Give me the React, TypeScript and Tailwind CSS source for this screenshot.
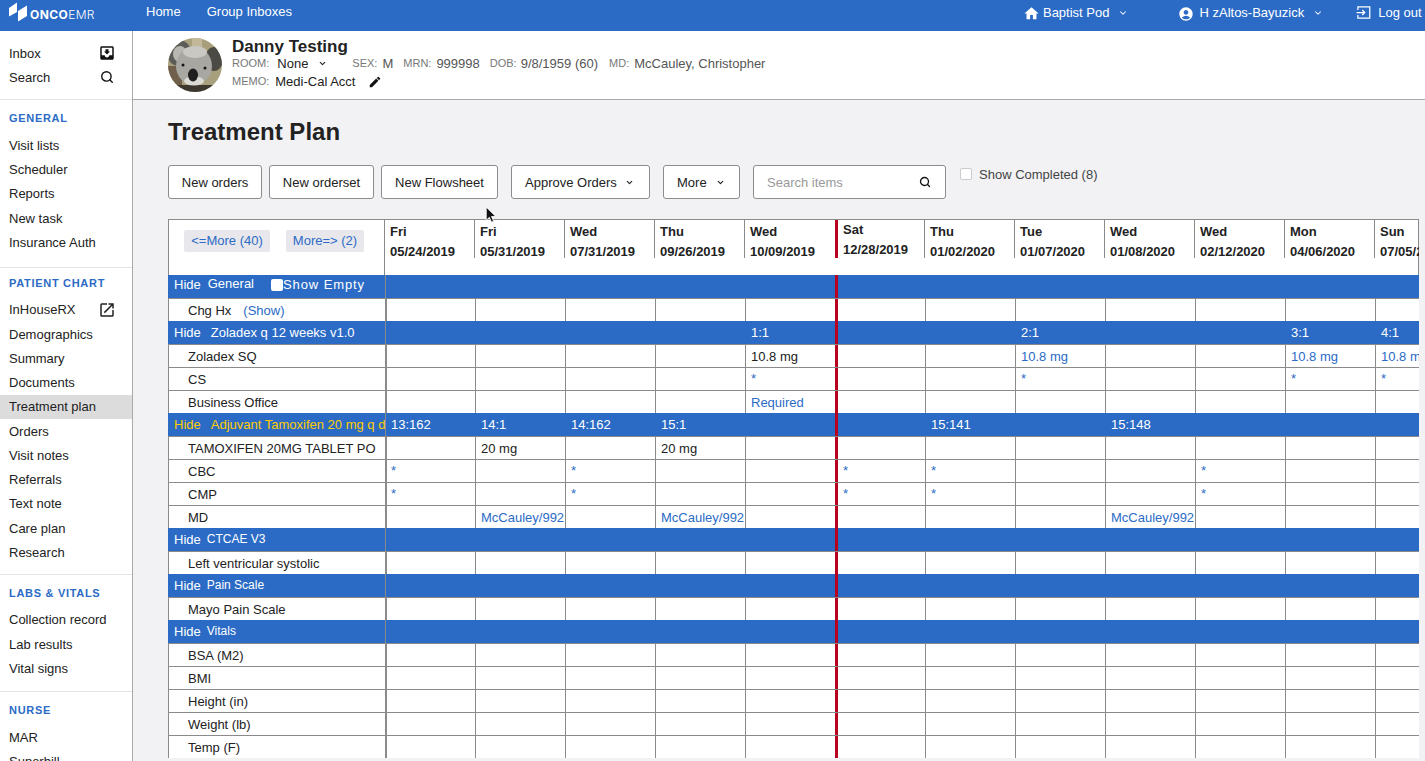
import { ReactNode } from 'react';
import { MdMoveToInbox, MdOpenInNew, MdEdit, MdHome, MdAccountCircle } from 'react-icons/md';
import { ChevronDown, Search } from 'lucide-react';

const dates = [
    ['Fri', '05/24/2019'],
    ['Fri', '05/31/2019'],
    ['Wed', '07/31/2019'],
    ['Thu', '09/26/2019'],
    ['Wed', '10/09/2019'],
    ['Sat', '12/28/2019'],
    ['Thu', '01/02/2020'],
    ['Tue', '01/07/2020'],
    ['Wed', '01/08/2020'],
    ['Wed', '02/12/2020'],
    ['Mon', '04/06/2020'],
    ['Sun', '07/05/2020'],
];

type Row =
    | { kind: 'group'; name: string; nameClass: string; yellow?: boolean; showEmpty?: boolean; cells?: Record<number, string> }
    | { kind: 'item'; name: string; show?: boolean; cells?: Record<number, string>; blue?: number[]; star?: boolean };

const rows: Row[] = [
    { kind: 'group', name: 'General', nameClass: 'ml-[7px] text-[13px] -translate-y-px', showEmpty: true },
    { kind: 'item', name: 'Chg Hx', show: true },
    { kind: 'group', name: 'Zoladex q 12 weeks v1.0', nameClass: 'ml-[10px] text-[13px]', cells: { 4: '1:1', 7: '2:1', 10: '3:1', 11: '4:1' } },
    { kind: 'item', name: 'Zoladex SQ', cells: { 4: '10.8 mg', 7: '10.8 mg', 10: '10.8 mg', 11: '10.8 mg' }, blue: [7, 10, 11] },
    { kind: 'item', name: 'CS', cells: { 4: '*', 7: '*', 10: '*', 11: '*' }, star: true },
    { kind: 'item', name: 'Business Office', cells: { 4: 'Required' }, blue: [4] },
    { kind: 'group', name: 'Adjuvant Tamoxifen 20 mg q d', nameClass: 'ml-[10px] text-[13px]', yellow: true, cells: { 0: '13:162', 1: '14:1', 2: '14:162', 3: '15:1', 6: '15:141', 8: '15:148' } },
    { kind: 'item', name: 'TAMOXIFEN 20MG TABLET PO', cells: { 1: '20 mg', 3: '20 mg' } },
    { kind: 'item', name: 'CBC', cells: { 0: '*', 2: '*', 5: '*', 6: '*', 9: '*' }, star: true },
    { kind: 'item', name: 'CMP', cells: { 0: '*', 2: '*', 5: '*', 6: '*', 9: '*' }, star: true },
    { kind: 'item', name: 'MD', cells: { 1: 'McCauley/992', 3: 'McCauley/992', 8: 'McCauley/992' }, blue: [1, 3, 8] },
    { kind: 'group', name: 'CTCAE V3', nameClass: 'ml-[6px] text-[12px] -translate-y-px' },
    { kind: 'item', name: 'Left ventricular systolic' },
    { kind: 'group', name: 'Pain Scale', nameClass: 'ml-[6px] text-[12px] -translate-y-px' },
    { kind: 'item', name: 'Mayo Pain Scale' },
    { kind: 'group', name: 'Vitals', nameClass: 'ml-[6px] text-[12px] -translate-y-px' },
    { kind: 'item', name: 'BSA (M2)' },
    { kind: 'item', name: 'BMI' },
    { kind: 'item', name: 'Height (in)' },
    { kind: 'item', name: 'Weight (lb)' },
    { kind: 'item', name: 'Temp (F)' },
];

function SideSection({ title, items, className }: { title: string; items: string[]; className: string }) {
    return (
        <div className={`border-b border-[#e4e4e4] ${className}`}>
            <div className="mb-[9.4px] px-[9px] text-[11px] leading-[12px] font-bold tracking-[0.7px] text-[#2b6bc6]">{title}</div>
            {items.map((item) => (
                <div
                    key={item}
                    className={`flex h-[24.25px] items-center justify-between px-[9px] text-[13px] text-[#222] ${item === 'Treatment plan' ? 'bg-[#dcdcdc]' : ''}`}
                >
                    {item}
                    {item === 'InHouseRX' && <MdOpenInNew className="mr-[7px] size-[18px] text-[#222]" />}
                </div>
            ))}
        </div>
    );
}

function Sidebar() {
    return (
        <aside className="w-[133px] shrink-0 overflow-hidden border-r border-[#aaaaaa] bg-white">
            <div className="h-[69px] border-b border-[#e4e4e4] pt-[11px]">
                <div className="flex h-[24px] items-center justify-between px-[9px] text-[13px] text-[#222]">
                    Inbox
                    <MdMoveToInbox className="mr-[7px] size-[18px] -translate-y-px text-[#111]" />
                </div>
                <div className="flex h-[24px] items-center justify-between px-[9px] text-[13px] text-[#222]">
                    Search
                    <Search className="mr-[9px] size-[14px] -translate-y-px text-[#111]" strokeWidth={2.4} />
                </div>
            </div>
            <SideSection
                title="GENERAL"
                className="pt-3 pb-[12px]"
                items={['Visit lists', 'Scheduler', 'Reports', 'New task', 'Insurance Auth']}
            />
            <SideSection
                title="PATIENT CHART"
                className="pt-[8.95px] pb-[9px]"
                items={['InHouseRX', 'Demographics', 'Summary', 'Documents', 'Treatment plan', 'Orders', 'Visit notes', 'Referrals', 'Text note', 'Care plan', 'Research']}
            />
            <SideSection
                title="LABS & VITALS"
                className="pt-3 pb-[10px]"
                items={['Collection record', 'Lab results', 'Vital signs']}
            />
            <SideSection title="NURSE" className="pt-3 pb-[10px]" items={['MAR', 'Superbill']} />
        </aside>
    );
}

function TopBar() {
    return (
        <header className="flex h-[31px] shrink-0 items-center bg-[#2b6bc6] text-[13px] whitespace-nowrap text-white">
            <svg viewBox="0 0 28 24" className="ml-[8px] h-[24px] w-[28px] shrink-0 -translate-y-[3px]" fill="#ffffff">
                <polygon points="1,7 9,1.500 9,11 1,15.500" />
                <polygon points="10,10 19,4.500 19,15 10,20.500" />
            </svg>
            <div className="ml-[-6px] flex w-[116px] -translate-y-[1px] items-baseline font-['Inter',sans-serif] text-[12px] tracking-[0.4px]">
                <span className="font-bold">ONCO</span>
                <span className="font-light">EMR</span>
            </div>
            <span className="-translate-y-[4px]">Home</span>
            <span className="ml-[26px] -translate-y-[4px]">Group Inboxes</span>
            <div className="ml-[731px] flex -translate-y-[3px] items-center">
                <MdHome className="size-[17px] translate-y-px" />
                <span className="ml-[3px]">Baptist Pod</span>
                <ChevronDown className="ml-[9px] size-[10px]" strokeWidth={2.5} />
            </div>
            <div className="ml-[50px] flex -translate-y-[3px] items-center">
                <MdAccountCircle className="size-[16px] translate-y-px" />
                <span className="ml-[5px]">H zAltos-Bayuzick</span>
                <ChevronDown className="ml-[9px] size-[10px]" strokeWidth={2.5} />
            </div>
            <div className="ml-[33px] flex -translate-y-[3px] items-center">
                <svg viewBox="0 0 24 24" className="size-[15px]" fill="none" stroke="currentColor" strokeWidth="2">
                    <path d="M3 8V3h19v18H3v-5" />
                    <path d="M1 12h13M10 8l4 4-4 4" />
                </svg>
                <span className="ml-[7px]">Log out</span>
            </div>
        </header>
    );
}

function Label({ children, className }: { children: ReactNode; className?: string }) {
    return <span className={`text-[11px] text-[#777] ${className ?? ''}`}>{children}</span>;
}

function Koala() {
    return (
        <svg viewBox="0 0 54 54" className="size-[54px] shrink-0 rounded-full">
            <rect width="54" height="54" fill="#a89f7c" />
            <rect x="0" y="28" width="14" height="26" fill="#6f5f4b" />
            <rect x="24" y="0" width="10" height="14" fill="#c3b89a" />
            <ellipse cx="11" cy="15" rx="12" ry="13" fill="#5b5b58" />
            <ellipse cx="12" cy="16" rx="7" ry="8" fill="#b9b7b1" />
            <ellipse cx="46" cy="21" rx="9" ry="12" fill="#4c4a45" />
            <ellipse cx="26" cy="28" rx="18" ry="19" fill="#a9a7a2" />
            <ellipse cx="27" cy="14" rx="12" ry="6" fill="#c9c8c3" />
            <rect x="8" y="47" width="38" height="7" fill="#3c3830" />
            <ellipse cx="26" cy="43" rx="10" ry="4.500" fill="#dcdad4" />
            <ellipse cx="25" cy="37" rx="5" ry="6.500" fill="#1f1f20" />
            <circle cx="15" cy="27" r="1.500" fill="#161616" />
            <circle cx="37" cy="30" r="1.500" fill="#161616" />
        </svg>
    );
}

function PatientHeader() {
    return (
        <div className="flex h-[69px] shrink-0 items-start border-b border-[#a8a8a8] bg-white pt-[7px] pl-[35px] text-[13px] whitespace-nowrap text-[#333]">
            <Koala />
            <div className="-mt-px ml-[10px]">
                <div className="text-[17px] leading-[19px] font-bold text-[#222]">Danny Testing</div>
                <div className="flex h-[15px] items-center">
                    <Label>ROOM:</Label>
                    <span className="ml-[8px] text-[#222]">None</span>
                    <ChevronDown className="ml-[10px] size-[9px] text-[#222]" strokeWidth={3} />
                    <Label className="ml-[25px]">SEX:</Label>
                    <span className="ml-[5px] text-[#555]">M</span>
                    <Label className="ml-[10px]">MRN:</Label>
                    <span className="ml-[5px] text-[#555]">999998</span>
                    <Label className="ml-[10px]">DOB:</Label>
                    <span className="ml-[4px] text-[#555]">9/8/1959 (60)</span>
                    <Label className="ml-[11px]">MD:</Label>
                    <span className="ml-[5px] text-[#555]">McCauley, Christopher</span>
                </div>
                <div className="mt-[3px] flex h-[15px] items-center">
                    <Label>MEMO:</Label>
                    <span className="ml-[6px] text-[#222]">Medi-Cal Acct</span>
                    <MdEdit className="ml-[13px] size-[14px] text-[#111]" />
                </div>
            </div>
        </div>
    );
}

function Btn({ children, className }: { children: ReactNode; className: string }) {
    return (
        <button className={`flex h-[34px] items-center rounded-[3px] border border-[#8c8c8c] bg-white pt-px text-[13px] text-[#222] ${className}`}>
            {children}
        </button>
    );
}

function Toolbar() {
    return (
        <div className="mt-[18px] flex items-start">
            <Btn className="w-[94px] justify-center">New orders</Btn>
            <Btn className="ml-[7px] w-[105px] justify-center">New orderset</Btn>
            <Btn className="ml-[7px] w-[117px] justify-center">New Flowsheet</Btn>
            <Btn className="ml-[13px] w-[139px] pl-[13px]">
                Approve Orders
                <ChevronDown className="ml-[8px] size-[9px]" strokeWidth={3} />
            </Btn>
            <Btn className="ml-[13px] w-[77px] pl-[13px]">
                More
                <ChevronDown className="ml-[9px] size-[9px]" strokeWidth={3} />
            </Btn>
            <div className="ml-[13px] flex h-[34px] w-[193px] items-center justify-between rounded-[3px] border border-[#8c8c8c] bg-white pt-px pr-[14px] pl-[13px] text-[13px] text-[#999]">
                Search items
                <Search className="size-[12px] -translate-y-px text-[#111]" strokeWidth={2.6} />
            </div>
            <div className="mt-[3px] ml-[14px] size-[12px] rounded-[2px] border border-[#cccccc] bg-white" />
            <span className="mt-px ml-[7px] text-[13px] leading-[18px] text-[#444]">Show Completed (8)</span>
        </div>
    );
}

function GridHeader() {
    return (
        <div className="flex h-[56px] border-x border-t border-[#8a8a8a] bg-white">
            <div className="flex h-full w-[216px] shrink-0 items-start gap-[16px] border-r border-[#8a8a8a] pt-[10px] pl-[15px]">
                <span className="flex h-[22px] w-[86px] items-center justify-center rounded-[2px] bg-[#e8e8ec] text-[13px] text-[#2b6bc6]">{'<=More (40)'}</span>
                <span className="flex h-[22px] w-[78px] items-center justify-center rounded-[2px] bg-[#e8e8ec] text-[13px] text-[#2b6bc6]">{'More=> (2)'}</span>
            </div>
            {dates.map(([day, date], i) => (
                <div
                    key={date}
                    className={`h-[38px] w-[90px] shrink-0 pl-[5px] text-[13px] leading-[20px] font-bold whitespace-nowrap text-[#222] ${i === 5 ? 'border-l-[3px] border-[#b8001f]' : 'pt-[2px]'} ${i === 4 ? '' : 'border-r border-r-[#8a8a8a]'}`}
                >
                    <div>{day}</div>
                    <div>{date}</div>
                </div>
            ))}
        </div>
    );
}

function GroupRow({ row }: { row: Extract<Row, { kind: 'group' }> }) {
    return (
        <div className="flex h-[23px] bg-[#2b6bc6] text-[13px] text-white">
            <div className={`flex w-[217px] shrink-0 items-center overflow-hidden pl-[6px] whitespace-nowrap ${row.yellow ? 'text-[#ffcc00]' : ''} ${row.showEmpty ? 'pb-[4px]' : ''}`}>
                <span>Hide</span>
                <span className={row.nameClass}>{row.name}</span>
                {row.showEmpty && (
                    <>
                        <span className="ml-[17px] size-[12px] rounded-[2px] bg-white" />
                        <span className="tracking-[0.9px]">Show Empty</span>
                    </>
                )}
            </div>
            {dates.map(([, date], i) => (
                <div
                    key={date}
                    className={`flex w-[90px] shrink-0 items-center pt-px whitespace-nowrap ${i === 5 ? 'border-l-[3px] border-[#b8001f] pl-[5px]' : i === 0 ? 'border-l border-[#8a8a8a] pl-[5px]' : 'pl-[6px]'}`}
                >
                    {row.cells?.[i]}
                </div>
            ))}
        </div>
    );
}

function ItemRow({ row }: { row: Extract<Row, { kind: 'item' }> }) {
    return (
        <div className="flex h-[23px] border-t border-l border-[#8a8a8a] bg-white text-[13px] text-[#222]">
            <div className="flex w-[216px] shrink-0 items-center pt-px pl-[19px] whitespace-nowrap">
                {row.name}
                {row.show && <span className="ml-[12px] text-[#2b6bc6]">(Show)</span>}
            </div>
            {dates.map(([, date], i) => (
                <div
                    key={date}
                    className={`flex w-[90px] shrink-0 overflow-hidden pt-px whitespace-nowrap ${row.star ? 'items-start text-[#2b6bc6]' : 'items-center'} ${row.blue?.includes(i) ? 'text-[#2b6bc6]' : ''} ${i === 5 ? 'border-l-[3px] border-[#b8001f] pl-[5px]' : i === 0 ? 'border-l-2 border-[#8a8a8a] pl-[4px]' : 'border-l border-[#8a8a8a] pl-[5px]'}`}
                >
                    {row.cells?.[i]}
                </div>
            ))}
        </div>
    );
}

function TreatmentGrid() {
    return (
        <div className="mt-[20px] w-[1251px] overflow-hidden">
            <GridHeader />
            {rows.map((row) =>
                row.kind === 'group' ? <GroupRow key={row.name} row={row} /> : <ItemRow key={row.name} row={row} />
            )}
        </div>
    );
}

export default function App() {
    return (
        <div className="relative flex h-screen flex-col overflow-hidden bg-[#f2f2f5] font-['Liberation_Sans',Arial,sans-serif]">
            <TopBar />
            <div className="flex min-h-0 flex-1">
                <Sidebar />
                <main className="min-w-0 flex-1">
                    <PatientHeader />
                    <div className="pl-[35px]">
                        <h1 className="pt-[17px] text-[24px] leading-[30px] font-bold text-[#222]">Treatment Plan</h1>
                        <Toolbar />
                        <TreatmentGrid />
                    </div>
                </main>
            </div>
            {/* mouse pointer caught in the capture */}
            <svg viewBox="0 0 12 17" className="absolute top-[206px] left-[485px] h-[18px] w-[13px]">
                <path d="M1 1v12.500l3-2.800 2 4.600 2-.9-2-4.500h4z" fill="#111" stroke="#fff" strokeWidth="0.8" />
            </svg>
        </div>
    );
}
